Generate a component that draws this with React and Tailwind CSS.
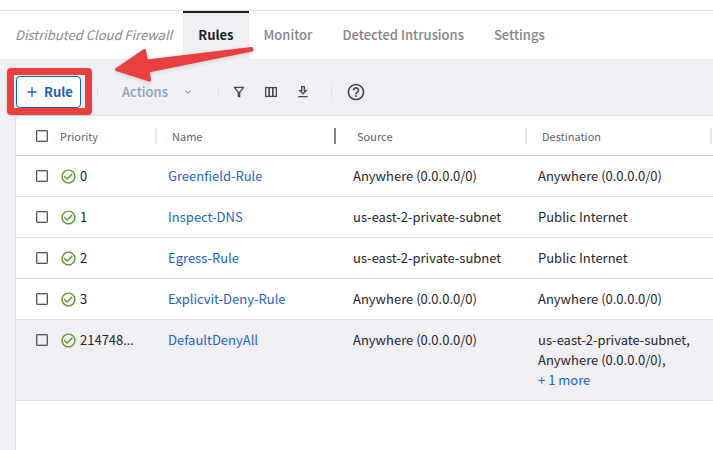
import {
  MdAdd,
  MdExpandMore,
  MdOutlineFilterAlt,
  MdOutlineGetApp,
  MdHelpOutline,
  MdCheckCircleOutline,
} from 'react-icons/md';

const rules = [
  { priority: '0', name: 'Greenfield-Rule', source: 'Anywhere (0.0.0.0/0)', destination: ['Anywhere (0.0.0.0/0)'] },
  { priority: '1', name: 'Inspect-DNS', source: 'us-east-2-private-subnet', destination: ['Public Internet'] },
  { priority: '2', name: 'Egress-Rule', source: 'us-east-2-private-subnet', destination: ['Public Internet'] },
  { priority: '3', name: 'Explicvit-Deny-Rule', source: 'Anywhere (0.0.0.0/0)', destination: ['Anywhere (0.0.0.0/0)'] },
  {
    priority: '214748',
    clipped: true,
    name: 'DefaultDenyAll',
    source: 'Anywhere (0.0.0.0/0)',
    destination: ['us-east-2-private-subnet,', 'Anywhere (0.0.0.0/0),'],
    more: '+ 1 more',
    shaded: true,
  },
];

function Divider() {
  return <span className="block h-3 w-px shrink-0 bg-[#dddde3]" />;
}

function Tab({ children }) {
  return (
    <a href="#" className="flex items-center px-[15px] font-medium text-[#85858d]">
      {children}
    </a>
  );
}

function Checkbox({ label }) {
  return (
    <input
      type="checkbox"
      aria-label={label}
      className="block size-3 shrink-0 appearance-none rounded-[1px] border border-[#55555f] bg-transparent inset-ring inset-ring-[#55555f]/35"
    />
  );
}

function ColumnsIcon() {
  return (
    <svg viewBox="0 0 24 24" className="size-4" fill="currentColor" aria-hidden="true">
      <path d="M3 4.500v15h18V4.500H3zm5 13H5v-11h3v11zm5.500 0h-3v-11h3v11zM19 17.500h-3v-11h3v11z" />
    </svg>
  );
}

function HeaderCell({ children, first, resizing }) {
  return (
    <th className="p-0 font-normal">
      <div className={first ? 'flex items-center justify-between pl-1' : 'flex items-center justify-between pl-4'}>
        <span className="text-[11px] leading-4 text-[#5f5f68]">{children}</span>
        <span className={resizing ? 'mr-[5px] h-4 w-0.5 bg-[#85858c]' : '-mr-px h-4 w-0.5 bg-[#e6e6ec]'} />
      </div>
    </th>
  );
}

function Arrow() {
  return (
    <svg
      viewBox="0 0 146 42"
      className="pointer-events-none absolute top-[-29px] left-[91px] h-[42px] w-[146px] overflow-visible drop-shadow-sm"
      aria-hidden="true"
    >
      <path
        d="M9.500 22.500L37.500 3.500L39.500 14L144.500 1.500L145 3L41 24L42.500 33Z"
        fill="#e93f3f"
        stroke="#e93f3f"
        strokeWidth="3"
        strokeLinejoin="round"
      />
    </svg>
  );
}

export default function App() {
  return (
    <div className="flex min-h-screen flex-col bg-[#f0eff4] font-['Noto_Sans_CJK_JP','Noto_Sans',sans-serif] text-[13px] leading-5 text-[#25252e]">
      <header className="bg-white pt-2.5">
        <nav className="flex h-[49px] border-t border-[#e0e0e5] pl-[15px]">
          <span className="flex items-center pr-[11px] text-[#8b8b8f] italic">Distributed Cloud Firewall</span>
          <a
            href="#"
            aria-current="page"
            className="flex items-center border-t-2 border-[#1c1b2b] bg-[#f0eff4] px-[15px] pb-0.5 font-bold text-[#1c1b2b]"
          >
            Rules
          </a>
          <Tab>Monitor</Tab>
          <Tab>Detected Intrusions</Tab>
          <Tab>Settings</Tab>
        </nav>
      </header>

      <div className="flex h-14 items-center px-4 pt-2.5 text-[#484850]">
        <div className="relative">
          <button
            type="button"
            className="flex h-8 w-[65px] items-center justify-center gap-1 rounded border border-[#1d62b8] bg-white font-bold text-[#1d62b8]"
          >
            <MdAdd className="size-4" />
            Rule
          </button>
          <span className="pointer-events-none absolute -top-2 -right-[11px] -bottom-[7px] -left-[9px] rounded border-[7px] border-[#e93f3f] shadow-sm" />
          <Arrow />
        </div>
        <div className="flex items-center pl-4">
          <Divider />
          <button type="button" className="flex items-center gap-3.5 px-6 font-medium text-[#86a3c3]">
            Actions
            <MdExpandMore className="size-3" />
          </button>
          <Divider />
          <div className="flex items-center gap-4 px-3">
            <button type="button" aria-label="Filter"><MdOutlineFilterAlt className="size-4" /></button>
            <button type="button" aria-label="Columns"><ColumnsIcon /></button>
            <button type="button" aria-label="Download"><MdOutlineGetApp className="size-4" /></button>
          </div>
          <span className="pl-2"><Divider /></span>
          <button type="button" aria-label="Help" className="pl-3.5"><MdHelpOutline className="size-5" /></button>
        </div>
      </div>

      <main className="flex flex-1 pl-[15px]">
        <div className="flex-1 rounded-tl border-t border-l border-[#e0e0e5] bg-white">
          <table className="w-full table-fixed border-separate border-spacing-0 text-left">
            <colgroup>
              <col className="w-10" />
              <col className="w-[100px]" />
              <col className="w-[185px]" />
              <col className="w-[185px]" />
              <col className="w-[185px]" />
              <col />
            </colgroup>
            <thead>
              <tr className="h-10 [&>th]:border-b [&>th]:border-[#c9c9cf]">
                <th className="p-0 pl-5"><Checkbox label="Select all rules" /></th>
                <HeaderCell first>Priority</HeaderCell>
                <HeaderCell resizing>Name</HeaderCell>
                <HeaderCell>Source</HeaderCell>
                <HeaderCell>Destination</HeaderCell>
                <th className="p-0" />
              </tr>
            </thead>
            <tbody>
              {rules.map((rule) => (
                <tr
                  key={rule.name}
                  className={
                    rule.shaded
                      ? 'bg-[#f0eff4] align-top [&>td]:border-b [&>td]:border-[#e0e0e5] [&>td]:py-2.5'
                      : 'align-top [&>td]:border-b [&>td]:border-[#e0e0e5] [&>td]:py-2.5'
                  }
                >
                  <td className="pl-5">
                    <div className="flex h-5 items-center"><Checkbox label={'Select ' + rule.name} /></div>
                  </td>
                  <td className="pl-1">
                    <div className="flex h-5 items-center gap-[3px]">
                      <MdCheckCircleOutline className="size-[17px] shrink-0 text-[#5a962c]" />
                      <span>
                        {rule.priority}
                        {rule.clipped && <span className="font-['Noto_Sans',sans-serif]">…</span>}
                      </span>
                    </div>
                  </td>
                  <td className="pl-3"><a href="#" className="text-[#1c66c4]">{rule.name}</a></td>
                  <td className="pl-3">{rule.source}</td>
                  <td className="pl-3">
                    {rule.destination.map((line) => (
                      <div key={line}>{line}</div>
                    ))}
                    {rule.more && <a href="#" className="block text-[#1c66c4]">{rule.more}</a>}
                  </td>
                  <td />
                </tr>
              ))}
            </tbody>
          </table>
        </div>
      </main>
    </div>
  );
}
